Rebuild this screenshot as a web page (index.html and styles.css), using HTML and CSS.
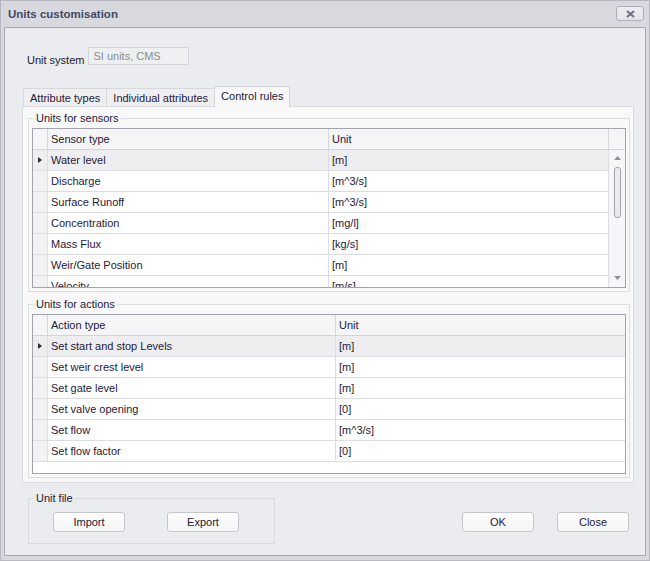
FILE: index.html
```html
<!DOCTYPE html>
<html lang="en">
<head>
  <meta charset="UTF-8" />
  <title>Units customisation</title>
  <link rel="stylesheet" href="styles.css">
</head>
<body>

  <div class="window">
    <div class="titlebar">
      <span class="title">Units customisation</span>
      <button class="close-btn" aria-label="Close">
        <svg width="9" height="8" viewBox="0 0 9 8"><path d="M1 1 L8 7 M8 1 L1 7" stroke="#6d7080" stroke-width="2" fill="none"/></svg>
      </button>
    </div>

    <div class="client">
      <div class="unit-system">
        <span class="label">Unit system</span>
        <div class="readonly-box">SI units, CMS</div>
      </div>

      <div class="tabs">
        <div class="tab">Attribute types</div>
        <div class="tab">Individual attributes</div>
        <div class="tab active">Control rules</div>
      </div>

      <div class="tab-panel">
        <fieldset class="group">
          <legend>Units for sensors</legend>
          <div class="grid sensors">
            <div class="grid-row grid-head">
              <div class="cell ind"></div>
              <div class="cell">Sensor type</div>
              <div class="cell">Unit</div>
              <div class="cell last"></div>
            </div>
            <div class="grid-body">
              <div class="rows">
                <div class="grid-row current">
                  <div class="cell ind"><svg width="4" height="6" viewBox="0 0 4 6"><path d="M0 0 L4 3 L0 6 Z" fill="#2b2b33"/></svg></div>
                  <div class="cell">Water level</div>
                  <div class="cell">[m]</div>
                </div>
                <div class="grid-row">
                  <div class="cell ind"></div>
                  <div class="cell">Discharge</div>
                  <div class="cell">[m^3/s]</div>
                </div>
                <div class="grid-row">
                  <div class="cell ind"></div>
                  <div class="cell">Surface Runoff</div>
                  <div class="cell">[m^3/s]</div>
                </div>
                <div class="grid-row">
                  <div class="cell ind"></div>
                  <div class="cell">Concentration</div>
                  <div class="cell">[mg/l]</div>
                </div>
                <div class="grid-row">
                  <div class="cell ind"></div>
                  <div class="cell">Mass Flux</div>
                  <div class="cell">[kg/s]</div>
                </div>
                <div class="grid-row">
                  <div class="cell ind"></div>
                  <div class="cell">Weir/Gate Position</div>
                  <div class="cell">[m]</div>
                </div>
                <div class="grid-row">
                  <div class="cell ind"></div>
                  <div class="cell">Velocity</div>
                  <div class="cell">[m/s]</div>
                </div>
              </div>
              <div class="vscroll">
                <svg width="7" height="4" viewBox="0 0 7 4"><path d="M3.5 0 L7 4 L0 4 Z" fill="#8e8f9a"/></svg>
                <div class="thumb"></div>
                <div class="spacer"></div>
                <svg width="7" height="4" viewBox="0 0 7 4"><path d="M0 0 L7 0 L3.5 4 Z" fill="#8e8f9a"/></svg>
              </div>
            </div>
          </div>
        </fieldset>

        <fieldset class="group second">
          <legend>Units for actions</legend>
          <div class="grid actions">
            <div class="grid-row grid-head">
              <div class="cell ind"></div>
              <div class="cell">Action type</div>
              <div class="cell last">Unit</div>
            </div>
            <div class="grid-row current">
              <div class="cell ind"><svg width="4" height="6" viewBox="0 0 4 6"><path d="M0 0 L4 3 L0 6 Z" fill="#2b2b33"/></svg></div>
              <div class="cell">Set start and stop Levels</div>
              <div class="cell last">[m]</div>
            </div>
            <div class="grid-row">
              <div class="cell ind"></div>
              <div class="cell">Set weir crest level</div>
              <div class="cell last">[m]</div>
            </div>
            <div class="grid-row">
              <div class="cell ind"></div>
              <div class="cell">Set gate level</div>
              <div class="cell last">[m]</div>
            </div>
            <div class="grid-row">
              <div class="cell ind"></div>
              <div class="cell">Set valve opening</div>
              <div class="cell last">[0]</div>
            </div>
            <div class="grid-row">
              <div class="cell ind"></div>
              <div class="cell">Set flow</div>
              <div class="cell last">[m^3/s]</div>
            </div>
            <div class="grid-row">
              <div class="cell ind"></div>
              <div class="cell">Set flow factor</div>
              <div class="cell last">[0]</div>
            </div>
          </div>
        </fieldset>
      </div>

      <div class="bottom-bar">
        <fieldset class="group unit-file">
          <legend>Unit file</legend>
          <div class="file-buttons">
            <button class="btn">Import</button>
            <button class="btn">Export</button>
          </div>
        </fieldset>
        <div class="dialog-buttons">
          <button class="btn">OK</button>
          <button class="btn">Close</button>
        </div>
      </div>
    </div>
  </div>

</body>
</html>
```

FILE: styles.css
```css
* {
  box-sizing: border-box;
}

body {
  margin: 0;
  font-family: "Liberation Sans", Arial, sans-serif;
  font-size: 11px;
  color: #1f2037;
  background: #fff;
}

.window {
  width: 650px;
  height: 561px;
  border: 1px solid #b7b8c1;
  background: #d8d9df;
  padding: 0 3px 4px 3px;
  display: flex;
  flex-direction: column;
}

.titlebar {
  height: 26px;
  display: flex;
  justify-content: space-between;
  align-items: flex-start;
  padding: 0 2px 0 4px;
}

.title {
  font-weight: bold;
  font-size: 11.5px;
  color: #45485f;
  line-height: 26px;
}

.close-btn {
  width: 28px;
  height: 15px;
  margin-top: 5px;
  padding: 0;
  border: 1px solid #acaeb8;
  border-radius: 3px;
  background: linear-gradient(#eeeff2, #e2e3e8);
  display: flex;
  align-items: center;
  justify-content: center;
}

.client {
  flex: 1;
  border: 1px solid #a6a8b2;
  background: #ebecef;
  padding: 19px 11px 0 17px;
}

/* unit system row */
.unit-system {
  display: flex;
  align-items: flex-start;
  height: 18px;
}

.unit-system .label {
  margin-left: 5px;
  margin-top: 7px;
  color: #202030;
}

.readonly-box {
  width: 101px;
  height: 18px;
  margin-left: 4px;
  border: 1px solid #d4d5da;
  background: #eeeff1;
  color: #8b8b90;
  padding-left: 4px;
  line-height: 16px;
}

/* tabs */
.tabs {
  display: flex;
  align-items: flex-end;
  height: 20px;
  margin-top: 21px;
  padding-left: 1px;
}

.tab {
  height: 18px;
  padding: 0 6px;
  line-height: 18px;
  border: 1px solid #d7d8dd;
  border-bottom: none;
  background: #efeff2;
  color: #1f2037;
  white-space: nowrap;
}

.tab + .tab {
  margin-left: -1px;
}

.tab.active {
  height: 21px;
  margin-bottom: -1px;
  line-height: 19px;
  background: #f8f8f9;
  border-color: #d3d4d9;
  position: relative;
  z-index: 1;
}

.tab-panel {
  border: 1px solid #dadbe0;
  background: #f8f8f9;
  padding: 4px 3px 4px 5px;
}

/* group boxes */
.group {
  margin: 0;
  border: 1px solid #dcdde1;
  padding: 3px;
}

.group legend {
  margin-left: 2px;
  padding: 0 2px;
  line-height: 14px;
  color: #1f2037;
}

.group.second {
  margin-top: 5px;
}

/* grids */
.grid {
  height: 160px;
  border: 1px solid #a2a3ac;
  background: #fff;
  overflow: hidden;
}

.grid-row {
  display: grid;
  height: 21px;
  border-bottom: 1px solid #dcdde2;
}

.cell {
  border-right: 1px solid #dcdde2;
  padding-left: 3px;
  line-height: 20px;
  white-space: nowrap;
  overflow: hidden;
}

.cell.last {
  border-right: none;
}

.cell.ind {
  padding-left: 0;
  background: #f2f2f4;
  display: flex;
  align-items: center;
  justify-content: center;
}

.grid-head .cell {
  background: #f5f5f7;
  border-right-color: #d5d6db;
}

.grid-head {
  border-bottom-color: #d2d3d8;
}

.grid-row.current .cell {
  background: #eeeef1;
}

.sensors .grid-head {
  grid-template-columns: 15px 281px 280px 16px;
}

.sensors .rows .grid-row {
  grid-template-columns: 15px 281px 280px;
}

.grid-body {
  display: flex;
  height: 137px;
}

.rows {
  width: 576px;
  overflow: hidden;
}

.vscroll {
  width: 16px;
  background: #f6f6f8;
  display: flex;
  flex-direction: column;
  align-items: center;
  padding: 6px 0 7px 0;
}

.thumb {
  width: 7px;
  height: 51px;
  margin-top: 7px;
  border: 1px solid #a3a4ae;
  border-radius: 3px;
  background: #ebebef;
}

.vscroll .spacer {
  flex: 1;
}

.actions .grid-row {
  grid-template-columns: 15px 288px 289px;
}

/* bottom */
.bottom-bar {
  display: flex;
  justify-content: space-between;
  align-items: flex-start;
  margin-top: 8px;
  padding: 0 5px 0 6px;
}

.group.unit-file {
  width: 247px;
  border-color: #d8d9de;
  padding: 7px 3px 11px 3px;
}

.file-buttons {
  display: flex;
  gap: 42px;
  padding-left: 21px;
}

.btn {
  width: 72px;
  height: 20px;
  padding: 0;
  border: 1px solid #c6c7cd;
  border-radius: 3px;
  background: linear-gradient(#fdfdfd, #f5f5f7);
  font-family: "Liberation Sans", Arial, sans-serif;
  font-size: 11px;
  color: #1f2037;
}

.dialog-buttons {
  display: flex;
  gap: 23px;
  margin-top: 21px;
}
```
